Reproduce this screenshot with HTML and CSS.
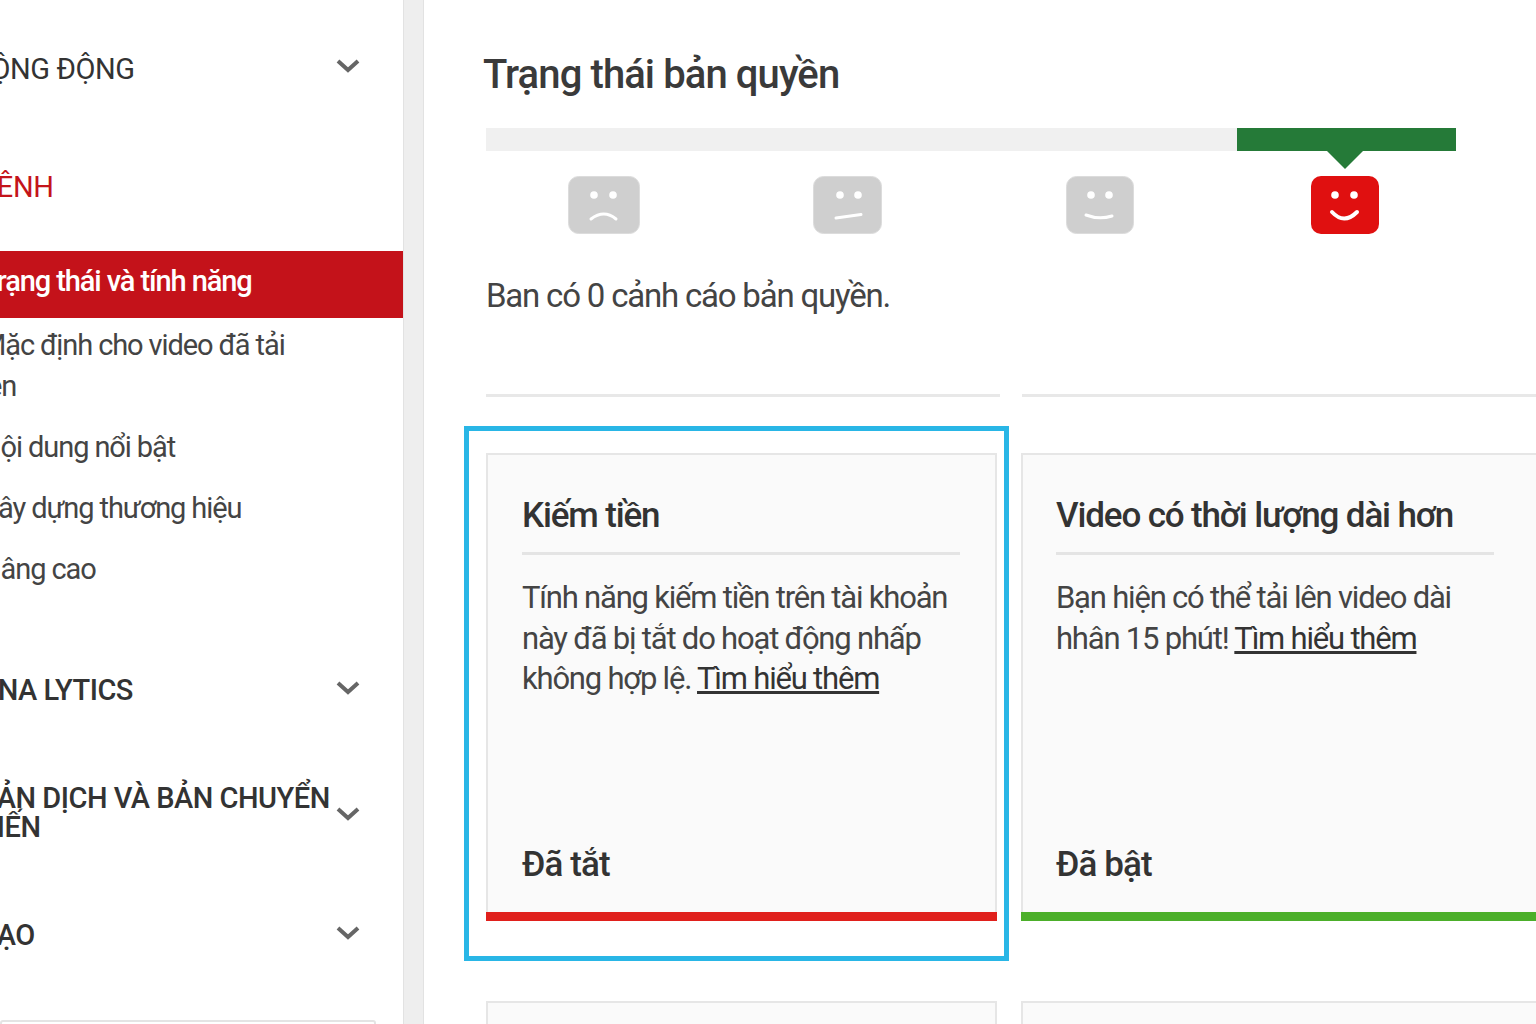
FILE: index.html
```html
<!DOCTYPE HTML>
<html>
<head>
	<meta charset="utf-8">
	<title>Trạng thái và tính năng</title>
	<link rel="stylesheet" href="styles.css">
</head>
<body>
<div class="page">
	<div class="sidebar">
		<div class="nav-head nav-head-first">
			<span class="nav-label">CỘNG ĐỘNG</span>
			<svg class="chevron" viewBox="0 0 24 14"><path d="M2 2 L12 11 L22 2" /></svg>
		</div>
		<div class="nav-channel">KÊNH</div>
		<div class="nav-item active">Trạng thái và tính năng</div>
		<div class="nav-item nav-two">Mặc định cho video đã tải<br>lên</div>
		<div class="nav-item">Nội dung nổi bật</div>
		<div class="nav-item">Xây dựng thương hiệu</div>
		<div class="nav-item">Nâng cao</div>
		<div class="nav-head nav-head-analytics">
			<span class="nav-label">ANA LYTICS</span>
			<svg class="chevron" viewBox="0 0 24 14"><path d="M2 2 L12 11 L22 2" /></svg>
		</div>
		<div class="nav-head nav-head-trans">
			<span class="nav-label">BẢN DỊCH VÀ BẢN CHUYỂN<br>BIẾN</span>
			<svg class="chevron" viewBox="0 0 24 14"><path d="M2 2 L12 11 L22 2" /></svg>
		</div>
		<div class="nav-head nav-head-create">
			<span class="nav-label">TẠO</span>
			<svg class="chevron" viewBox="0 0 24 14"><path d="M2 2 L12 11 L22 2" /></svg>
		</div>
		<div class="nav-box"></div>
	</div>
	<div class="gutter"></div>
	<div class="main">
		<h1 class="title">Trạng thái bản quyền</h1>
		<div class="meter">
			<div class="meter-fill"></div>
		</div>
		<div class="faces">
			<svg class="face face-1" viewBox="0 0 72 58"><rect x="0.5" y="0.5" width="71" height="57" rx="10" class="face-bg" /><circle cx="26" cy="19" r="3.8" class="dot" /><circle cx="45" cy="19" r="3.8" class="dot" /><path d="M23 43 Q36 33 48 43" class="mouth" /></svg>
			<svg class="face face-2" viewBox="0 0 69 58"><rect x="0.5" y="0.5" width="68" height="57" rx="10" class="face-bg" /><circle cx="27" cy="19" r="3.8" class="dot" /><circle cx="45" cy="19" r="3.8" class="dot" /><path d="M23 42 L48 38.500" class="mouth" /></svg>
			<svg class="face face-3" viewBox="0 0 68 58"><rect x="0.5" y="0.5" width="67" height="57" rx="10" class="face-bg" /><circle cx="25" cy="19" r="3.8" class="dot" /><circle cx="43" cy="19" r="3.8" class="dot" /><path d="M20 39 Q33 44 46 40" class="mouth" /></svg>
			<svg class="face face-4" viewBox="0 0 68 58"><rect width="68" height="58" rx="10" fill="#e01010" /><circle cx="24" cy="19" r="3.800" class="dot" /><circle cx="43" cy="19" r="3.800" class="dot" /><path d="M21 36 Q33 49 46 36" class="mouth mouth-on" /></svg>
		</div>
		<p class="strikes">Ban có 0 cảnh cáo bản quyền.</p>
		<div class="rule-row">
			<div class="rule rule-a"></div>
			<div class="rule rule-b"></div>
		</div>
		<div class="cards">
			<div class="focus-box"></div>
			<div class="card card-off">
				<h2 class="card-title">Kiếm tiền</h2>
				<p class="card-text">Tính năng kiếm tiền trên tài khoản này đã bị tắt do hoạt động nhấp không hợp lệ. <a class="more">Tìm hiểu thêm</a></p>
				<div class="card-state">Đã tắt</div>
			</div>
			<div class="card card-on">
				<h2 class="card-title">Video có thời lượng dài hơn</h2>
				<p class="card-text">Bạn hiện có thể tải lên video dài<br>hhân 15 phút! <a class="more">Tìm hiểu thêm</a></p>
				<div class="card-state">Đã bật</div>
			</div>
			<div class="card card-next"></div>
			<div class="card card-next"></div>
		</div>
	</div>
</div>
</body>
</html>
```

FILE: styles.css
```css
html, body {
	margin: 0;
	height: 100%;
	background: #fff;
	overflow: hidden;
}

body {
	font-family: Roboto, "Liberation Sans", sans-serif;
	color: #333;
}

.page {
	display: flex;
	height: 1024px;
	overflow: hidden;
}

/* sidebar, text is cut by the left edge of the window */
.sidebar {
	width: 403px;
	flex: none;
	overflow: hidden;
}

.nav-head {
	display: flex;
	align-items: center;
	justify-content: space-between;
	margin-left: -21px;
	padding-right: 43px;
}

.nav-label {
	font-size: 29px;
	line-height: 29px;
	letter-spacing: -0.4px;
	color: #333;
	white-space: nowrap;
}

.nav-head-first {
	margin-left: -28px;
	padding-top: 55px;
}

.nav-head-analytics {
	margin-top: 86px;
}

.nav-head-trans {
	margin-top: 79px;
}

.nav-head-create {
	margin-top: 79px;
	margin-left: -19px;
}

.nav-head-analytics .nav-label,
.nav-head-trans .nav-label,
.nav-head-create .nav-label {
	font-weight: 500;
	letter-spacing: -0.5px;
}

.chevron {
	width: 24px;
	height: 14px;
	flex: none;
	margin-bottom: 6px;
	fill: none;
	stroke: #666;
	stroke-width: 4;
}

.nav-head-first .chevron {
	margin-bottom: 8px;
}

.nav-head-trans .chevron {
	margin-top: 2px;
	margin-bottom: 0;
}

.nav-channel {
	margin-top: 88px;
	margin-left: -21px;
	font-size: 29px;
	line-height: 30px;
	letter-spacing: -0.4px;
	color: #c4141a;
}

.nav-item {
	margin-top: 20px;
	margin-left: -19px;
	font-size: 29px;
	line-height: 41px;
	letter-spacing: -1.1px;
	color: #444;
	white-space: nowrap;
}

.nav-item.active {
	margin-top: 49px;
	height: 67px;
	line-height: 61px;
	background: #c4121a;
	color: #fff;
	font-weight: 500;
}

.nav-two {
	margin-top: 7px;
}

.nav-box {
	margin-top: 70px;
	margin-right: 27px;
	height: 20px;
	border: 2px solid #e4e4e4;
	border-radius: 3px;
}

.gutter {
	width: 19px;
	flex: none;
	background: #eee;
	border-left: 1px solid #e2e2e2;
	border-right: 1px solid #e2e2e2;
}

/* main column */
.main {
	flex: 1;
	min-width: 0;
	padding-left: 62px;
	overflow: hidden;
}

.title {
	margin: 51px 0 0 -3px;
	font-size: 40px;
	line-height: 48px;
	font-weight: 500;
	letter-spacing: -0.9px;
	color: #3a3a3a;
	white-space: nowrap;
}

.meter {
	display: flex;
	justify-content: flex-end;
	width: 970px;
	height: 23px;
	margin-top: 29px;
	background: #f0f0f0;
}

.meter-fill {
	position: relative;
	width: 219px;
	background: #257a38;
}

.meter-fill:after {
	content: "";
	position: absolute;
	left: 90px;
	top: 23px;
	border-left: 18px solid transparent;
	border-right: 18px solid transparent;
	border-top: 18px solid #257a38;
}

.faces {
	display: flex;
	margin-top: 25px;
	height: 58px;
}

.face {
	height: 58px;
	flex: none;
}

.face-1 {
	width: 72px;
	margin-left: 82px;
}

.face-2 {
	width: 69px;
	margin-left: 173px;
}

.face-3 {
	width: 68px;
	margin-left: 184px;
}

.face-4 {
	width: 68px;
	margin-left: 177px;
}

.face-bg {
	fill: #cfcfcf;
	stroke: #dcdcdc;
}

.dot {
	fill: #fff;
}

.mouth {
	fill: none;
	stroke: #fff;
	stroke-width: 3;
	stroke-linecap: round;
}

.mouth-on {
	stroke-width: 4;
}

.strikes {
	margin: 42px 0 0;
	font-size: 33px;
	line-height: 40px;
	letter-spacing: -1.2px;
	color: #444;
	white-space: nowrap;
}

.rule-row {
	display: flex;
	gap: 22px;
	margin-top: 78px;
}

.rule {
	height: 3px;
	background: #e8e8e8;
}

.rule-a {
	width: 514px;
	flex: none;
}

.rule-b {
	flex: 1;
}

.cards {
	position: relative;
	display: grid;
	grid-template-columns: 511px 530px;
	grid-auto-rows: 468px;
	gap: 80px 24px;
	margin-top: 56px;
}

.focus-box {
	position: absolute;
	left: -22px;
	top: -27px;
	width: 535px;
	height: 525px;
	border: 5px solid #29b6e6;
}

.card {
	position: relative;
	display: flex;
	flex-direction: column;
	box-sizing: border-box;
	padding: 38px 34px 0;
	background: #fafafa;
	border: 2px solid #e6e6e6;
	border-bottom: 0;
}

.card-on {
	padding-left: 33px;
}

/* coloured foot of the card, runs over the side borders */
.card-off:after,
.card-on:after {
	content: "";
	position: absolute;
	left: -2px;
	right: -2px;
	bottom: 0;
	height: 9px;
}

.card-off:after {
	background: #e0201c;
}

.card-on:after {
	background: #4caf2a;
}

.card-title {
	margin: 0;
	padding-bottom: 13px;
	width: 438px;
	font-size: 35px;
	line-height: 46px;
	font-weight: 500;
	letter-spacing: -1.15px;
	color: #333;
	border-bottom: 3px solid #e4e4e4;
	white-space: nowrap;
}

.card-text {
	flex: 1;
	margin: 23px 0 0;
	width: 440px;
	font-size: 31px;
	line-height: 40.5px;
	letter-spacing: -1.2px;
	color: #444;
}

.more {
	color: #333;
	text-decoration: underline;
}

.card-state {
	padding-bottom: 35px;
	font-size: 35px;
	line-height: 42px;
	font-weight: 500;
	letter-spacing: -0.9px;
	color: #333;
}

.card-next {
	padding: 0;
}
```
